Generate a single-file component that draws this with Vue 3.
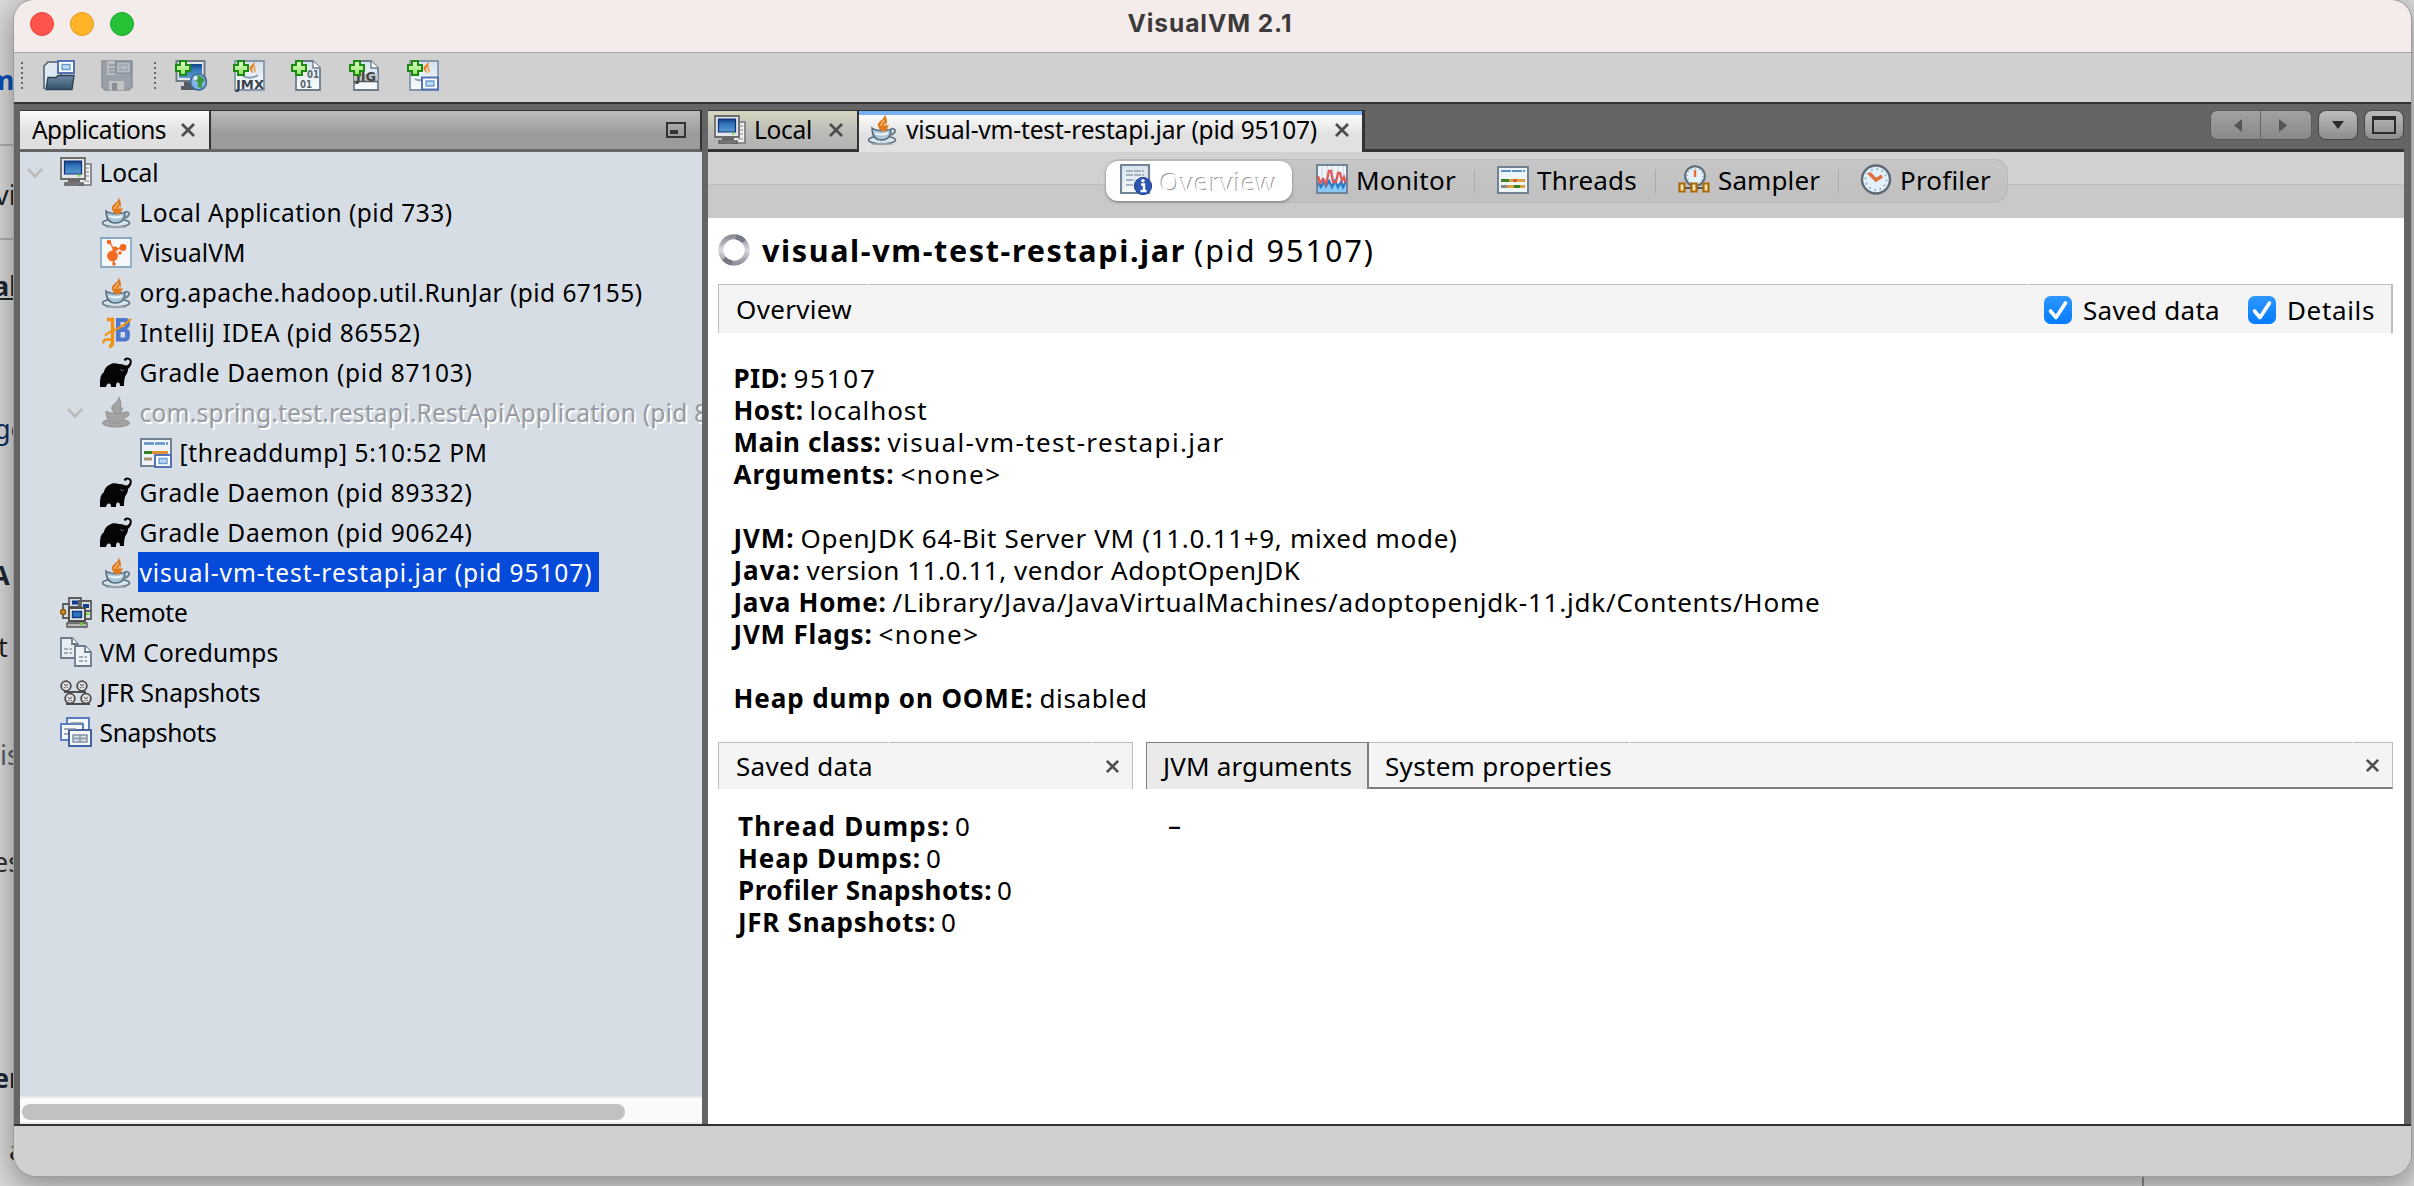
<script setup>
// Spreads a label's letters so that it fills the given width in pixels.
const vFit = {
  mounted(el, { value }) {
    const n = el.textContent.length
    const w = el.getBoundingClientRect().width
    el.style.letterSpacing = (value - w) / n + 'px'
  },
}

const tools = [
  { icon: 'open', gap: 20 },
  { icon: 'save', gap: 26 },
  { icon: 'grip', gap: 21 },
  { icon: 'add-host', gap: 19, plus: true },
  { icon: 'add-jmx', gap: 26, plus: true, marks: [{ t: 'JMX', x: 3, y: 29, s: 13, len: 28, c: '#39424c' }] },
  { icon: 'page', gap: 26, plus: true, marks: [{ t: '01', x: 16, y: 18, s: 10, len: 12, c: '#5b6772' }, { t: '01', x: 9, y: 28, s: 10, len: 12, c: '#5b6772' }] },
  { icon: 'add-jfr', gap: 26, plus: true, marks: [{ t: 'JIG', x: 7, y: 21, s: 12, len: 20, c: '#444' }] },
  { icon: 'add-snap', gap: 26, plus: true },
]

const tree = [
  { level: 0, icon: 'local', text: 'Local', w: 59, open: true },
  { level: 1, icon: 'java', text: 'Local Application (pid 733)', w: 313 },
  { level: 1, icon: 'vvm', text: 'VisualVM', w: 106 },
  { level: 1, icon: 'java', text: 'org.apache.hadoop.util.RunJar (pid 67155)', w: 503 },
  { level: 1, icon: 'idea', text: 'IntelliJ IDEA (pid 86552)', w: 281 },
  { level: 1, icon: 'gradle', text: 'Gradle Daemon (pid 87103)', w: 333 },
  { level: 1, icon: 'java-off', text: 'com.spring.test.restapi.RestApiApplication (pid 88', w: 583, open: true, off: true },
  { level: 2, icon: 'tdump', text: '[threaddump] 5:10:52 PM', w: 308 },
  { level: 1, icon: 'gradle', text: 'Gradle Daemon (pid 89332)', w: 333 },
  { level: 1, icon: 'gradle', text: 'Gradle Daemon (pid 90624)', w: 333 },
  { level: 1, icon: 'java', text: 'visual-vm-test-restapi.jar (pid 95107)', w: 453, selected: true },
  { level: 0, icon: 'remote', text: 'Remote', w: 88 },
  { level: 0, icon: 'core', text: 'VM Coredumps', w: 179 },
  { level: 0, icon: 'jfr', text: 'JFR Snapshots', w: 161 },
  { level: 0, icon: 'snaps', text: 'Snapshots', w: 117 },
]

const views = [
  { icon: 'monitor', text: 'Monitor', w: 100, ml: 24 },
  { icon: 'threads', text: 'Threads', w: 100, ml: 22 },
  { icon: 'sampler', text: 'Sampler', w: 102, ml: 22 },
  { icon: 'profiler', text: 'Profiler', w: 91, ml: 21 },
]

const details = [
  ['PID:', 54, '95107', 83],
  ['Host:', 70, 'localhost', 118],
  ['Main class:', 148, 'visual-vm-test-restapi.jar', 337],
  ['Arguments:', 161, '<none>', 101],
  null,
  ['JVM:', 61, 'OpenJDK 64-Bit Server VM (11.0.11+9, mixed mode)', 657],
  ['Java:', 67, 'version 11.0.11, vendor AdoptOpenJDK', 494],
  ['Java Home:', 153, '/Library/Java/JavaVirtualMachines/adoptopenjdk-11.jdk/Contents/Home', 928],
  ['JVM Flags:', 139, '<none>', 101],
  null,
  ['Heap dump on OOME:', 300, 'disabled', 108],
]

const saved = [
  ['Thread Dumps:', 212],
  ['Heap Dumps:', 183],
  ['Profiler Snapshots:', 254],
  ['JFR Snapshots:', 198],
]

const behind = [
  { y: 60, text: 'm', c: '#0b50b8', b: true, x: -12 },
  { y: 175, text: 'vi', c: '#222', x: -5 },
  { y: 266, text: 'al', c: '#1d2733', b: true, u: true, x: -7 },
  { y: 409, text: 'go', c: '#0d2f63', x: -6 },
  { y: 555, text: 'A', c: '#1d2733', b: true, x: -9 },
  { y: 627, text: 't', c: '#222', x: -2 },
  { y: 735, text: 'is', c: '#56606c', x: 0 },
  { y: 842, text: 'es', c: '#333', x: -7 },
  { y: 1058, text: 'er', c: '#1d2733', b: true, x: -7 },
  { y: 1130, text: 'a', c: '#222', x: 9 },
]
</script>

<template>
  <div class="desk">
    <svg class="defs" width="0" height="0">
      <defs>
        <linearGradient id="gScreen" x1="0" y1="0" x2="0" y2="1"><stop offset="0" stop-color="#123f86" /><stop offset=".35" stop-color="#2f74b8" /><stop offset="1" stop-color="#5c9bd0" /></linearGradient>
        <linearGradient id="gSheet" x1="0" y1="0" x2="0" y2="1"><stop offset="0" stop-color="#d6e2ec" /><stop offset="1" stop-color="#fafcfd" /></linearGradient>
        <linearGradient id="gPlus" x1="0" y1="0" x2="0" y2="1"><stop offset="0" stop-color="#e6ffd0" /><stop offset="1" stop-color="#8fe060" /></linearGradient>
        <linearGradient id="gCheck" x1="0" y1="0" x2="0" y2="1"><stop offset="0" stop-color="#2f97ff" /><stop offset="1" stop-color="#047bfe" /></linearGradient>
        <linearGradient id="gSpin" x1="0" y1="0" x2="0" y2="1"><stop offset="0" stop-color="#8b8d98" /><stop offset=".5" stop-color="#d9dade" /><stop offset="1" stop-color="#8f929c" /></linearGradient>
        <linearGradient id="gFolder" x1="0" y1="0" x2="0" y2="1"><stop offset="0" stop-color="#6f8ba4" /><stop offset="1" stop-color="#33506c" /></linearGradient>
      </defs>
      <symbol id="plus" viewBox="0 0 16 16">
        <path d="M5 1h6v4h4v6h-4v4H5v-4H1V5h4z" fill="url(#gPlus)" stroke="#1b8a12" stroke-width="2" />
      </symbol>
      <symbol id="minisnap" viewBox="0 0 18 14">
        <path d="M1 1h16v12H1z" fill="#fff" stroke="#5472b8" stroke-width="2" /><path d="M5 4.500h8v5H5z" fill="#b8dcf8" stroke="#6b9ad0" stroke-width="1.300" />
      </symbol>
      <symbol id="open" viewBox="0 0 32 32">
        <path d="M1 29V6l4-4h13v16" fill="#dce8f2" stroke="#54606e" stroke-width="1.600" />
        <path d="M3 29.500l2-12h8l2-2h16l-2 14z" fill="url(#gFolder)" stroke="#2c4257" stroke-width="1.400" />
        <use href="#minisnap" x="14" y="0" width="18" height="14" />
      </symbol>
      <symbol id="save" viewBox="0 0 32 32">
        <path d="M1 1h30v26l-3 3H4l-3-3z" fill="#9aa1a8" stroke="#8b929a" stroke-width="1.500" />
        <path d="M6 1h20v14H6z" fill="#b9bdc1" /><path d="M8 5h8M8 9h8M8 12h10" stroke="#8f969c" stroke-width="1.600" />
        <path d="M15 1.500h15v12H15z" fill="#b5bac0" stroke="#8790a0" stroke-width="2" /><path d="M19 5h7v5h-7z" fill="none" stroke="#9aa5b4" stroke-width="1.400" />
        <path d="M8 21h15v9H8z" fill="#c0c3c6" /><path d="M11 23h5v7h-5z" fill="#878d93" />
      </symbol>
      <symbol id="add-host" viewBox="0 0 32 32">
        <path d="M1.500 1h28v20h-28z" fill="#e2e6ea" stroke="#6e7a86" stroke-width="2" /><path d="M4 4h23v14H4z" fill="url(#gScreen)" /><path d="M9 22h14v4H9zM6 26h18v4H6z" fill="#555b62" />
        <circle cx="23.500" cy="22" r="8" fill="#7fb4e4" stroke="#41659a" stroke-width="1.600" /><path d="M18 19l6-4 6 5-3 3v5l-4-1v-5z" fill="#3c9a3a" /><circle cx="20.500" cy="18" r="2.200" fill="#d6ecfb" />
      </symbol>
      <symbol id="flame" viewBox="0 0 12 16">
        <path d="M7.500 0C8 3 1.500 5.500 2 8.500c.3 2.200 2.600 3 3 5.500 2-2-.8-3.800.2-5.400C6 7 9 5 7.500 0z" fill="#e8842a" /><path d="M10 5C6.500 6.500 5.800 8.500 7 10c.9 1.400.6 2.600-.4 4C9.800 12.300 9.500 10.500 8.500 9 7.700 7.800 8.500 6.500 10 5z" fill="#f09a45" />
      </symbol>
      <symbol id="add-jmx" viewBox="0 0 32 32">
        <path d="M2 1h29v29H2z" fill="url(#gSheet)" stroke="#8296ac" stroke-width="1.800" /><use href="#flame" x="14" y="1" width="12" height="14" /><path d="M10 16c6 3 12 1 15-1" stroke="#8aa0b4" stroke-width="2" fill="none" />
      </symbol>
      <symbol id="page" viewBox="0 0 32 32">
        <path d="M5 1h17l7 7v22H5z" fill="url(#gSheet)" stroke="#6e7d8c" stroke-width="1.800" /><path d="M22 1v7h7" fill="#fff" stroke="#6e7d8c" stroke-width="1.400" />
      </symbol>
      <symbol id="add-jfr" viewBox="0 0 32 32">
        <use href="#page" /><path d="M5 14h24v7H5z" fill="#c2c6ca" /><path d="M5 21.500h24" stroke="#555" stroke-width="1.500" />
      </symbol>
      <symbol id="add-snap" viewBox="0 0 32 32">
        <path d="M3 1h28v29H3z" fill="url(#gSheet)" stroke="#8296ac" stroke-width="1.800" /><use href="#flame" x="14" y="1" width="12" height="14" /><path d="M8 19c3 2 8 1 10 0" stroke="#8aa0b4" stroke-width="2" fill="none" />
        <use href="#minisnap" x="14" y="16" width="18" height="15" />
      </symbol>
      <symbol id="local" viewBox="0 0 32 32">
        <path d="M24 7h7v21H18" fill="#eceef0" stroke="#777" stroke-width="1.600" /><path d="M26 11h3M26 15h3M26 19h3M24 24h5" stroke="#aaa" stroke-width="1.400" />
        <path d="M1 1h24v21H1z" fill="#e4e6e8" stroke="#6c6c6c" stroke-width="1.800" /><path d="M4.500 4h17v13h-17z" fill="url(#gScreen)" stroke="#0e2f80" stroke-width="1.200" /><path d="M18 18.500h2.500" stroke="#5fe020" stroke-width="2" />
        <path d="M8 23h12v2H8z" fill="#666" /><path d="M5 26h18v2H5z" fill="#d0d0d0" stroke="#555" stroke-width="1.400" />
      </symbol>
      <symbol id="java" viewBox="0 0 32 32">
        <path d="M18.500 0c1.500 4-5 6.500-6.500 10-1 3 2.500 5 3 8h5c2-3 1-4.500 3-7-1.500 0-2 .5-3 1.500C21 9 22 6 18.500 0z" fill="#e07a1c" /><path d="M18 6c-1 3-4 4-3 7M20 9c-3 3-2 5-3 7" stroke="#fbc58a" stroke-width="1.200" fill="none" />
        <ellipse cx="16" cy="26" rx="13.500" ry="4" fill="#d8e4ec" stroke="#5c6f7d" stroke-width="1.500" /><ellipse cx="16" cy="30" rx="11" ry="1.200" fill="#9aa4ac" />
        <path d="M6 14c0 9 4 12 9.500 12S25 23 25 15c-3 2-15 2.500-19-1z" fill="#a9c6d8" stroke="#526878" stroke-width="1.400" />
        <path d="M25 15c5-1 6 3 0 6" fill="none" stroke="#6b8090" stroke-width="2" /><path d="M9 19c3 2 9 2 13 0" stroke="#eef6fa" stroke-width="2" fill="none" />
        <path d="M12.500 12h9l-2 5.500h-4z" fill="#e07a1c" />
      </symbol>
      <symbol id="java-off" viewBox="0 0 32 32">
        <g fill="#a3a3a3" stroke="#8f8f8f" stroke-width="1"><path d="M18.500 0c1.500 4-5 6.500-6.500 10-1 3 2.500 5 3 8h5c2-3 1-4.500 3-7-1.500 0-2 .5-3 1.500C21 9 22 6 18.500 0z" /><ellipse cx="16" cy="26" rx="13.500" ry="4" /><path d="M6 14c0 9 4 12 9.500 12S25 23 25 15c-3 2-15 2.500-19-1z" /><path d="M25 15c5-1 6 3 0 6" /></g>
      </symbol>
      <symbol id="vvm" viewBox="0 0 32 32">
        <path d="M1 1h30v29H1z" fill="#f6f8fa" stroke="#88a9c4" stroke-width="1.800" /><path d="M9 4l5 9M23 10l-8 3M13 20l1 7" stroke="#f36a1e" stroke-width="1.400" />
        <circle cx="9" cy="5" r="2.300" fill="#f36a1e" /><circle cx="23" cy="10.500" r="3.400" fill="#f36a1e" /><circle cx="15" cy="12" r="2.600" fill="#f36a1e" /><circle cx="12.500" cy="19" r="5.400" fill="#f36a1e" /><circle cx="20" cy="16" r="1.800" fill="#f36a1e" /><circle cx="14" cy="27" r="1.800" fill="#f36a1e" />
      </symbol>
      <symbol id="idea" viewBox="0 0 32 32">
        <path d="M16 1h9q5 0 5 5.500 0 4-3 5 3 1 3 6 0 7-5 7h-9z" fill="#4d78cc" /><path d="M20.500 5h4v5h-4zM20.500 15h4.500v5.500h-4.500z" fill="#d6dde5" />
        <path d="M7 2.500h5.500v23q0 4-3.500 4" fill="none" stroke="#f29111" stroke-width="3.400" /><path d="M11 22.500H6q-3 0-2.500 4M5 18.500q4-4 10-5.500Q25 8 31 2" fill="none" stroke="#f29111" stroke-width="2.300" />
      </symbol>
      <symbol id="gradle" viewBox="0 0 32 32">
        <path d="M0 30c0-8 0-12 4-15 .5-4 4-7 8-8.500 4-1 6 .5 8 .5 3 0 5 2 7 1.500 2.500-1 3.500-4 2-5.500-1-1-2.500-.5-3.500 1l-1.800-1C25-.5 30 0 31.500 3c1 4-1 7-3.500 9 0 4-2 5.500-3 8-1 3-1 6-1 9h-4c0-2-.3-3.500-2-3.500S16 27 16 30h-5c0-2-.5-3.500-2-3.500S6.500 28 6 30z" fill="#060606" /><path d="M20 12c1 2 3 2 4 1" stroke="#667" stroke-width="1" fill="none" />
      </symbol>
      <symbol id="threads" viewBox="0 0 32 32">
        <path d="M1 3h30v26H1z" fill="#eef5fa" stroke="#6f8193" stroke-width="2" /><path d="M4 7h24" stroke="#5d8fc4" stroke-width="2" stroke-dasharray="10 1" /><path d="M4 16.500h24" stroke="#e0a040" stroke-width="3" /><path d="M4 16.500h8" stroke="#3a7f20" stroke-width="3" /><path d="M16 16.500h4" stroke="#d85a3a" stroke-width="3" /><path d="M4 22.500h24" stroke="#e0a040" stroke-width="3" /><path d="M4 22.500h6" stroke="#8a8a80" stroke-width="3" /><path d="M17 22.500h6" stroke="#3a7f20" stroke-width="3" />
      </symbol>
      <symbol id="tdump" viewBox="0 0 32 32">
        <path d="M1 2h30v27H1z" fill="#eef5fa" stroke="#6f8193" stroke-width="2" /><path d="M4 6.500h24" stroke="#5d8fc4" stroke-width="2.500" stroke-dasharray="10 1" /><path d="M4 15.500h8" stroke="#3a7f20" stroke-width="3" /><path d="M12 15.500h16" stroke="#e0903a" stroke-width="3" /><path d="M4 22h8" stroke="#a89070" stroke-width="3" />
        <use href="#minisnap" x="14" y="17" width="18" height="14" />
      </symbol>
      <symbol id="remote" viewBox="0 0 32 32">
        <g fill="#d9dcdf" stroke="#5c5c5c" stroke-width="1.800"><path d="M9 1h12v9H9zM19 4h12v10H19zM3 7h6v14H3z" /><path d="M20 14h11v8H20z" /></g><path d="M12 3.500h6v4h-6zM23 7h6v4h-6z" fill="#143a94" />
        <path d="M9 11h16v13H9z" fill="#e4e6e8" stroke="#4e4e4e" stroke-width="2" /><path d="M12.500 14.500h9v6h-9z" fill="#2f78bd" stroke="#123a88" stroke-width="1.400" /><path d="M7 26h20v4H7z" fill="#b8b8b8" stroke="#555" stroke-width="1.400" /><path d="M20 27h3M26 17h3" stroke="#64dc1e" stroke-width="2.200" /><circle cx="3" cy="15" r="2.600" fill="#c98a2c" stroke="#875610" stroke-width="1.400" />
      </symbol>
      <symbol id="core" viewBox="0 0 32 32">
        <g stroke="#6b7b8c" stroke-width="1.800"><path d="M1 1h11l6 6v14H1z" fill="#e8eef3" /><path d="M12 1v6h6" fill="#fff" /><path d="M15 9h10l6 6v14H15z" fill="#eef3f7" /><path d="M25 9v6h6" fill="#fff" /></g><path d="M4 12h8M4 16h8M19 20h8M19 24h8" stroke="#8b98a5" stroke-width="1.600" stroke-dasharray="4 1.500" />
      </symbol>
      <symbol id="jfr" viewBox="0 0 32 32">
        <g fill="#e8e8e8" stroke="#4c4c4c" stroke-width="1.800"><circle cx="6" cy="9" r="4.800" /><circle cx="22" cy="9" r="4.800" /><circle cx="10" cy="21.500" r="4.800" /><circle cx="26" cy="21.500" r="4.800" /></g><path d="M4 15h22M6 27h24" stroke="#4c4c4c" stroke-width="2" /><path d="M4 7l4 4M8 7l-4 4M20 7l4 4M24 7l-4 4M8 20l4 4M12 20l-4 4M24 20l4 4M28 20l-4 4" stroke="#777" stroke-width="1.200" />
      </symbol>
      <symbol id="snaps" viewBox="0 0 32 32">
        <g stroke="#5b7cc0" stroke-width="2" fill="#f4f7fb"><path d="M7 1h22v15H7z" /><path d="M1 7h22v16H1z" /><path d="M9 13h22v16H9z" stroke="#45619f" /></g><path d="M13 18h14v7H13zM20 18v7M13 21.500h14" fill="#d8e0e8" stroke="#8593a3" stroke-width="1.500" /><path d="M4 12h12M4 17h4M11 6h12" stroke="#8593a3" stroke-width="1.500" />
      </symbol>
      <symbol id="overview" viewBox="0 0 32 32">
        <path d="M1 1h28v28H1z" fill="url(#gSheet)" stroke="#708496" stroke-width="2.200" /><path d="M6 7h18M6 11h18M6 16h9M6 21h8" stroke="#93a1ae" stroke-width="1.700" stroke-dasharray="7 1" /><circle cx="23" cy="22" r="8.600" fill="#2c55b4" stroke="#1d3d8e" /><path d="M21 20.500h3v6M20.500 27h6" stroke="#fff" stroke-width="2.400" fill="none" /><circle cx="23" cy="16.800" r="1.700" fill="#fff" />
      </symbol>
      <symbol id="monitor" viewBox="0 0 32 32">
        <path d="M1 1h30v28H1z" fill="#f0f5f9" stroke="#708496" stroke-width="2" /><path d="M6 2v14M11 2v14M17 2v14M22 2v14M27 2v14" stroke="#c9d2da" /><path d="M2 20h28v8H2z" fill="#8cc8f4" /><path d="M2 19l3 4 3-6 2 5 3-5 3 6 3-6 3 6 3-5 2 5 3-6" fill="none" stroke="#2b7cc8" stroke-width="2.400" /><path d="M2 12l2 7 3-4 3 5 3-13 2 0 2 11 3 0 2-9 2 0 2 8 2-4 2 6" fill="none" stroke="#dd5b5b" stroke-width="2.300" />
      </symbol>
      <symbol id="sampler" viewBox="0 0 32 32">
        <circle cx="17" cy="12" r="9.800" fill="#e6f2fa" stroke="#5d6a76" stroke-width="2" /><circle cx="17" cy="12" r="7.500" fill="none" stroke="#8fb0cc" stroke-width="1.400" stroke-dasharray="1.200 2.700" /><path d="M17 6v7" stroke="#e2703a" stroke-width="2.500" />
        <path d="M2 24h28" stroke="#555" stroke-width="2" /><g fill="#ffe9a8" stroke="#a86a08" stroke-width="2.200"><path d="M1.500 19.500h5v8h-5zM13.500 19.500h5v8h-5zM25.500 19.500h5v8h-5z" /></g>
      </symbol>
      <symbol id="profiler" viewBox="0 0 32 32">
        <circle cx="16" cy="15.500" r="14" fill="#e2f0fa" stroke="#5d6a76" stroke-width="2.400" /><circle cx="16" cy="15.500" r="10.500" fill="none" stroke="#8fb0cc" stroke-width="1.800" stroke-dasharray="1.800 3.700" /><path d="M9 9l7 7 6-4" fill="none" stroke="#e2703a" stroke-width="3.600" />
      </symbol>
      <symbol id="cross" viewBox="0 0 16 16"><path d="M2 2l12 12M14 2L2 14" stroke="#4d4d4d" stroke-width="2.800" /></symbol>
      <symbol id="check" viewBox="0 0 28 28"><rect width="28" height="28" rx="6.500" fill="url(#gCheck)" /><path d="M6.500 15l5.500 6.500L21.500 7" fill="none" stroke="#fff" stroke-width="3.600" stroke-linecap="round" stroke-linejoin="round" /></symbol>
      <symbol id="spin" viewBox="0 0 32 32"><circle cx="16" cy="16" r="13.200" fill="none" stroke="url(#gSpin)" stroke-width="5" /><path d="M18 3a13 13 0 0 1 8 4.500M14 29a13 13 0 0 1-8-4.500" fill="none" stroke="#777a86" stroke-width="5" /></symbol>
    </svg>

    <div v-for="b in behind" :key="b.y" class="behind" :class="{ bold: b.b, under: b.u }" :style="{ top: b.y + 'px', left: b.x + 'px', color: b.c }">{{ b.text }}</div>
    <div class="rule r1"></div>
    <div class="rule r2"></div>
    <div class="vrule"></div>

    <div class="window">
      <header class="titlebar">
        <span class="light red"></span><span class="light yellow"></span><span class="light green"></span>
        <h1><span v-fit="165">VisualVM 2.1</span></h1>
      </header>

      <div class="toolbar">
        <i class="grip"></i>
        <template v-for="(t, i) in tools" :key="i">
          <i v-if="t.icon === 'grip'" class="grip" :style="{ marginLeft: t.gap + 'px' }"></i>
          <svg v-else width="32" height="32" viewBox="0 0 32 32" :style="{ marginLeft: t.gap + 'px' }">
            <use :href="'#' + t.icon" width="32" height="32" />
            <text v-for="(m, k) in t.marks || []" :key="k" :x="m.x" :y="m.y" :font-size="m.s" :textLength="m.len" lengthAdjust="spacingAndGlyphs" :fill="m.c">{{ m.t }}</text>
            <use v-if="t.plus" href="#plus" width="16" height="16" />
          </svg>
        </template>
      </div>

      <div class="work">
        <aside>
          <div class="sidehead">
            <div class="sidetab"><span v-fit="134">Applications</span><svg width="16" height="16"><use href="#cross" /></svg></div>
            <div class="sidefill"><i class="mini"></i></div>
          </div>
          <div class="tree">
            <div v-for="(n, i) in tree" :key="i" class="node" :style="{ paddingLeft: n.level * 40 + 'px' }">
              <svg class="chev" width="16" height="10" viewBox="0 0 16 10"><path v-if="n.open" d="M1 1l7 7.500L15 1" fill="none" stroke="#bcbcbc" stroke-width="2.600" /></svg>
              <svg width="32" height="32"><use :href="'#' + n.icon" /></svg>
              <span class="label" :class="{ selected: n.selected, off: n.off }"><span v-fit="n.w">{{ n.text }}</span></span>
            </div>
          </div>
          <div class="scroll"><div class="thumb"></div></div>
        </aside>

        <main>
          <div class="tabs">
            <div class="tab"><svg width="32" height="32"><use href="#local" /></svg><span v-fit="58">Local</span><svg class="x" width="16" height="16"><use href="#cross" /></svg></div>
            <div class="tab active"><svg width="32" height="32"><use href="#java" /></svg><span v-fit="411">visual-vm-test-restapi.jar (pid 95107)</span><svg class="x" width="16" height="16"><use href="#cross" /></svg></div>
            <div class="controls">
              <div class="pair">
                <span><svg width="8" height="13"><path d="M8 0v13L0 6.500z" fill="#555" /></svg></span>
                <span><svg width="8" height="13"><path d="M0 0v13l8-6.500z" fill="#555" /></svg></span>
              </div>
              <div class="btn"><svg width="12" height="8"><path d="M0 0h12L6 8z" fill="#2b2b2b" /></svg></div>
              <div class="btn"><i class="max"></i></div>
            </div>
          </div>

          <div class="viewbar">
            <div class="segments">
              <div class="seg on"><svg width="32" height="32"><use href="#overview" /></svg><span v-fit="117">Overview</span></div>
              <template v-for="(v, i) in views" :key="v.text">
                <i v-if="i" class="sep"></i>
                <div class="seg" :style="{ marginLeft: v.ml + 'px' }"><svg width="32" height="32"><use :href="'#' + v.icon" /></svg><span v-fit="v.w">{{ v.text }}</span></div>
              </template>
            </div>
          </div>

          <h2><svg width="32" height="32"><use href="#spin" /></svg><b v-fit="424">visual-vm-test-restapi.jar</b><span v-fit="181">(pid 95107)</span></h2>

          <div class="bar overview">
            <span v-fit="116">Overview</span>
            <div class="checks">
              <svg width="28" height="28"><use href="#check" /></svg><span v-fit="137">Saved data</span>
              <svg class="second" width="28" height="28"><use href="#check" /></svg><span v-fit="88">Details</span>
            </div>
            <i class="notch" style="left: 149px"></i><i class="notch" style="left: 1308px"></i>
          </div>

          <div class="details">
            <p v-for="(d, i) in details" :key="i"><template v-if="d"><b v-fit="d[1]">{{ d[0] }}</b><span v-fit="d[3]">{{ d[2] }}</span></template></p>
          </div>

          <div class="lower">
            <section class="left">
              <div class="bar"><span v-fit="137">Saved data</span><svg class="x" width="15" height="15"><use href="#cross" /></svg><i class="notch" style="left: 169px"></i><i class="notch" style="left: 372px"></i></div>
              <div class="list">
                <p v-for="s in saved" :key="s[0]"><b v-fit="s[1]">{{ s[0] }}</b><span>0</span></p>
              </div>
            </section>
            <section class="right">
              <div class="proptabs">
                <div class="ptab"><span v-fit="189">JVM arguments</span></div>
                <div class="bar"><span v-fit="227">System properties</span><svg class="x" width="15" height="15"><use href="#cross" /></svg><i class="notch" style="left: 260px"></i><i class="notch" style="left: 983px"></i></div>
              </div>
              <p class="dash">–</p>
            </section>
          </div>
        </main>
      </div>
      <footer></footer>
    </div>
  </div>
</template>

<style>
body { margin: 0; background: #d8d8d8; overflow: hidden; }
</style>

<style scoped>
.desk { position: relative; width: 2414px; height: 1186px; overflow: hidden; box-sizing: border-box; padding-left: 14px; background: #dcdcdc; font-family: "Noto Sans", "Open Sans", sans-serif; color: #000; }
.defs { position: absolute; }
.behind { position: absolute; font-size: 27px; line-height: 40px; }
.behind.bold { font-weight: 700; }
.behind.under { text-decoration: underline; }
.rule { position: absolute; left: 0; width: 14px; height: 2px; background: #b4b4b8; }
.r1 { top: 144px; }
.r2 { top: 238px; }
.vrule { position: absolute; left: 2142px; top: 1176px; width: 2px; height: 10px; background: #909090; }
.window { position: relative; width: 2397px; height: 1176px; border-radius: 20px 20px 22px 22px; overflow: hidden; display: flex; flex-direction: column; background: #d0d0d0; box-shadow: 0 0 0 1px #9c9c9c, 0 8px 30px 4px rgba(0, 0, 0, .35); }
.desk svg { display: block; flex: none; }
.titlebar { height: 53px; background: #f4ebeb; border-bottom: 1px solid #a8a4a4; display: flex; align-items: center; padding: 0 0 4px 16px; box-sizing: border-box; flex: none; }
.light { width: 24px; height: 24px; border-radius: 50%; margin-right: 16px; box-sizing: border-box; border: 1px solid; }
.red { background: #ff544d; border-color: #e0443e; }
.yellow { background: #ffb429; border-color: #dd9a20; }
.green { background: #26c137; border-color: #1ca62b; }
h1 { flex: 1; margin: 0 141px 2px 0; text-align: center; font: 700 24.500px/44px "Inter", sans-serif; color: #3c3a3a; }
h1 span { display: inline-block; white-space: nowrap; }
.toolbar { height: 51px; flex: none; box-sizing: border-box; border-bottom: 2px solid #333; display: flex; align-items: center; background: #d0d0d0; padding: 0 0 5px 7px; }
.toolbar svg { margin-top: 2px; }
.toolbar text { font-family: "DejaVu Sans", sans-serif; font-weight: 700; }
.grip { width: 2px; height: 27px; flex: none; background: repeating-linear-gradient(#666 0 2px, transparent 2px 5px); }
.work { flex: none; display: flex; background: #656565; padding: 6px 6px 0; box-sizing: border-box; border-bottom: 2px solid #333; width: 2397px; height: 1022px; }
aside { width: 682px; display: flex; flex-direction: column; margin-right: 6px; }
.sidehead { height: 42px; flex: none; display: flex; box-sizing: border-box; border-top: 1px solid #333; border-bottom: 3px solid #666; border-right: 2px solid #333; }
.sidetab { width: 189px; background: linear-gradient(#fbfbfb, #e0e0e0 55%); border-right: 2px solid #333; display: flex; align-items: center; box-sizing: content-box; font-size: 24.500px; }
.sidetab > span { margin: -2px 0 0 12px; white-space: nowrap; display: inline-block; }
.sidetab svg { margin-left: 14px; }
.sidefill { flex: 1; background: linear-gradient(#bdbdbd, #9b9b9b 60%); display: flex; justify-content: flex-end; align-items: center; padding-right: 14px; }
.mini { width: 20px; height: 16px; box-sizing: border-box; border: 2px solid #333; background: linear-gradient(#333, #333) 2px 6px / 8px 4px no-repeat; }
.tree { height: 944px; flex: none; background: #d6dde5; overflow: hidden; }
.node { height: 40px; display: flex; align-items: center; }
.node > svg { position: relative; top: 1px; }
.chev { margin: 0 17px 0 7px; }
.label { display: block; margin-left: 6px; padding-left: 1.500px; height: 40px; font-size: 24.500px; line-height: 42px; white-space: nowrap; }
.label > span, .tab > span, .seg > span, .bar span, .ptab span, h2 b, h2 span, .details b, .details span, .list b { display: inline-block; white-space: nowrap; }
.label > span { vertical-align: top; }
.selected { background: #064ada; color: #fff; padding-right: 6px; }
.off { color: #979ba1; text-shadow: 2px 2px 0 #fff; }
.scroll { flex: 1; background: #fafafa; border-top: 2px solid #e8e8e8; border-bottom: 2px solid #ececec; padding: 6px 0 0 2px; }
.thumb { width: 603px; height: 16px; border-radius: 8px; background: #c1c1c1; }
main { width: 1696px; background: #fff; display: flex; flex-direction: column; min-width: 0; }
.tabs { height: 42px; flex: none; display: flex; background: #656565; box-sizing: border-box; font-size: 24.500px; }
.tab { height: 42px; width: 149px; border-right: 2px solid #333; display: flex; align-items: center; box-sizing: content-box; background: linear-gradient(#333 1px, #d6d7c0 1px, #bcbcb8 50%, #b0b0b0); box-shadow: inset 0 -3px #333; }
.tab svg:first-child { margin-left: 6px; }
.tab span { margin: -4px 0 0 8px; }
.tab .x { margin: -2px 0 0 16px; }
.tab.active { width: 503px; border-right: 3px solid #333; background: linear-gradient(#333 1px, #78b0f8 1px, #78b0f8 5px, #fbfbfb 5px, #e1e1e1 60%); box-shadow: none; }
.tab.active svg:first-child { margin-left: 7px; margin-top: -2px; }
.tab.active .x { margin-left: 17px; }
.controls { flex: 1; display: flex; justify-content: flex-end; align-items: flex-start; gap: 8px; padding: 1px 1px 0 0; border-bottom: 3px solid #333; box-sizing: border-box; height: 42px; }
.pair { display: flex; width: 100px; height: 28px; border-radius: 6px; background: linear-gradient(#a2a2a2, #888); box-shadow: 0 0 0 1px #5a5a5a; }
.pair span { flex: 1; display: flex; align-items: center; justify-content: center; }
.pair span + span { border-left: 1px solid #666; padding-right: 6px; }
.pair span:first-child { padding-left: 5px; }
.btn { width: 38px; height: 28px; border-radius: 7px; background: linear-gradient(#bcbcbc, #8d8d8d); box-shadow: 0 0 0 1px #484848; display: flex; align-items: center; justify-content: center; }
.max { width: 24px; height: 18px; box-sizing: border-box; border: 2px solid #2b2b2b; border-top-width: 4px; }
.viewbar { height: 66px; flex: none; background: linear-gradient(#d1d1d1 32px, #bdbdbd 32px, #bdbdbd 33px, #c9c9c9 33px); padding: 7px 0 0 398px; box-sizing: border-box; }
.segments { width: 902px; height: 44px; border-radius: 14px; background: linear-gradient(#c6c6c6, #c0c0c0); box-shadow: inset 0 0 0 1px #bababa; display: flex; align-items: center; font-size: 26px; }
.seg { display: flex; align-items: center; flex: none; }
.seg svg { margin-top: -3px; }
.seg > span { margin-left: 8px; line-height: 40px; margin-top: -2px; }
.seg.on { width: 186px; height: 40px; background: #fff; border-radius: 12px; box-shadow: 0 1px 3px #777; }
.seg.on svg { margin: 0 0 2px 14px; }
.seg.on span { color: #fff; text-shadow: -1px -1px 0 #999; margin-top: 2px; }
.sep { width: 1px; height: 24px; background: #adadad; margin-left: 18px; flex: none; }
h2 { height: 66px; margin: 0; display: flex; align-items: center; font-size: 30.500px; font-weight: 400; padding: 0 0 0 10px; box-sizing: border-box; flex: none; }
h2 svg { margin-top: -2px; }
h2 b { margin-left: 12px; margin-top: -2px; }
h2 span { margin-left: 8px; margin-top: -2px; }
.bar { position: relative; background: #f4f4f4; border: 1px solid #bdbdbd; border-bottom: 0; display: flex; align-items: center; font-size: 26px; box-sizing: border-box; }
.bar > span { margin-left: 17px; margin-top: -1px; }
.bar .x { margin-left: auto; margin-right: 12px; }
.notch { position: absolute; top: -1px; width: 1px; height: 1px; background: #fff; }
.overview { margin-left: 10px; width: 1675px; height: 49px; flex: none; border-right-width: 2px; }
.checks { margin-left: auto; display: flex; align-items: center; padding-right: 16px; margin-top: 2px; }
.checks span { margin-left: 11px; }
.checks .second { margin-left: 28px; }
.details { margin: 29px 0 0 25.500px; font-size: 26px; line-height: 32px; height: 380px; flex: none; }
p { margin: 0; height: 32px; display: flex; }
.details span { margin-left: 6px; }
.lower { display: flex; margin: 0 10px; font-size: 26px; }
.left { width: 415px; margin-right: 13px; }
.left .bar { height: 47px; }
.list { padding: 21px 0 0 20px; line-height: 32px; }
.list span { margin-left: 5px; }
.right { width: 1247px; }
.proptabs { display: flex; height: 47px; box-sizing: border-box; }
.ptab { width: 223px; flex: none; background: #eaeaea; border: 1px solid #7f7f7f; border-right-width: 2px; border-bottom: 0; box-sizing: border-box; display: flex; align-items: center; }
.ptab span { margin-left: 16px; margin-top: -1px; }
.proptabs .bar { flex: 1; border-left: 0; border-bottom: 2px solid #7f7f7f; }
.proptabs .bar > span { margin-left: 16px; margin-top: 1px; }
.proptabs .bar .x { margin-right: 12px; }
.dash { margin: 20px 0 0 22px; line-height: 32px; font-weight: 500; }
footer { flex: 1; background: #d0d0d0; }
</style>
